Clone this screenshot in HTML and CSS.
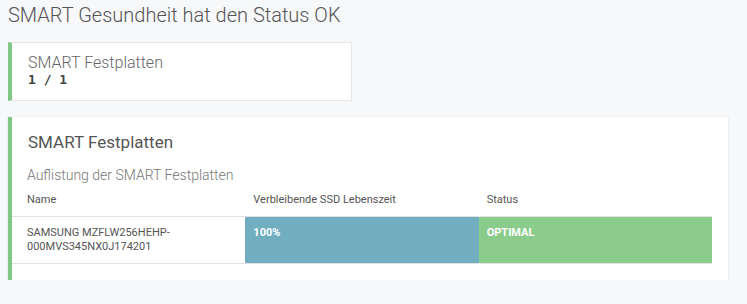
FILE: index.html
```html
<!DOCTYPE html>
<html lang="de">
<head>
  <meta charset="UTF-8">
  <title>SMART Status</title>
  <link rel="stylesheet" href="styles.css">
</head>
<body>
  <h1 class="page-title">SMART Gesundheit hat den Status OK</h1>

  <div class="box stat-box">
    <div class="stat-label">SMART Festplatten</div>
    <div class="stat-value">1 / 1</div>
  </div>

  <div class="box panel">
    <h2 class="panel-title">SMART Festplatten</h2>
    <div class="panel-sub">Auflistung der SMART Festplatten</div>
    <table class="disk-table">
      <thead>
        <tr>
          <th>Name</th>
          <th>Verbleibende SSD Lebenszeit</th>
          <th>Status</th>
        </tr>
      </thead>
      <tbody>
        <tr>
          <td>SAMSUNG MZFLW256HEHP-<br>000MVS345NX0J174201</td>
          <td class="cell-info">100%</td>
          <td class="cell-ok">OPTIMAL</td>
        </tr>
      </tbody>
    </table>
  </div>
</body>
</html>
```

FILE: styles.css
```css
body { margin: 0; padding: 0 19px 0 8px; background: #f7f8fa; font-family: Roboto, "Noto Sans", sans-serif; color: #555; }
.page-title { margin: 0; padding-top: 3px; font-size: 20px; line-height: 24px; font-weight: 300; color: #555; }
.box { background: #fff; border-left: 4px solid #80c783; }
.stat-box { width: 323px; margin-top: 15px; padding: 10px 0 13px 16px; border-top: 1px solid #e6e6e6; border-right: 1px solid #e6e6e6; border-bottom: 1px solid #e6e6e6; }
.stat-label { font-size: 16px; line-height: 19px; font-weight: 300; color: #666; }
.stat-value { font-family: "DejaVu Sans Mono", monospace; font-weight: bold; font-size: 13px; line-height: 15px; color: #444; }
.panel { margin-top: 16px; padding: 14px 16px 16px 0; box-shadow: 0 1px 3px rgba(0,0,0,0.12); }
.panel-title { margin: 0 0 0 16px; font-size: 17px; line-height: 22px; font-weight: 400; color: #555; }
.panel-sub { margin: 13px 0 0 15px; font-size: 14px; line-height: 18px; font-weight: 300; color: #777; }
.disk-table { width: 700px; margin-top: 0; border-collapse: collapse; table-layout: fixed; font-size: 11px; }
.disk-table th { text-align: left; font-weight: 400; color: #555; padding: 9px 8px 9px; line-height: 14px; border-bottom: 1px solid #e2e2e2; }
.disk-table td { vertical-align: top; padding: 9px 8px; line-height: 14px; color: #555; border-top: 1px solid rgba(0,0,0,0.08); border-bottom: 1px solid #e2e2e2; }
.disk-table th:first-child, .disk-table td:first-child { padding-left: 15px; }
.cell-info { background: #70aec0; color: #fff !important; font-weight: bold; }
.cell-ok { background: #8bcb8b; color: #fff !important; font-weight: bold; }
```
